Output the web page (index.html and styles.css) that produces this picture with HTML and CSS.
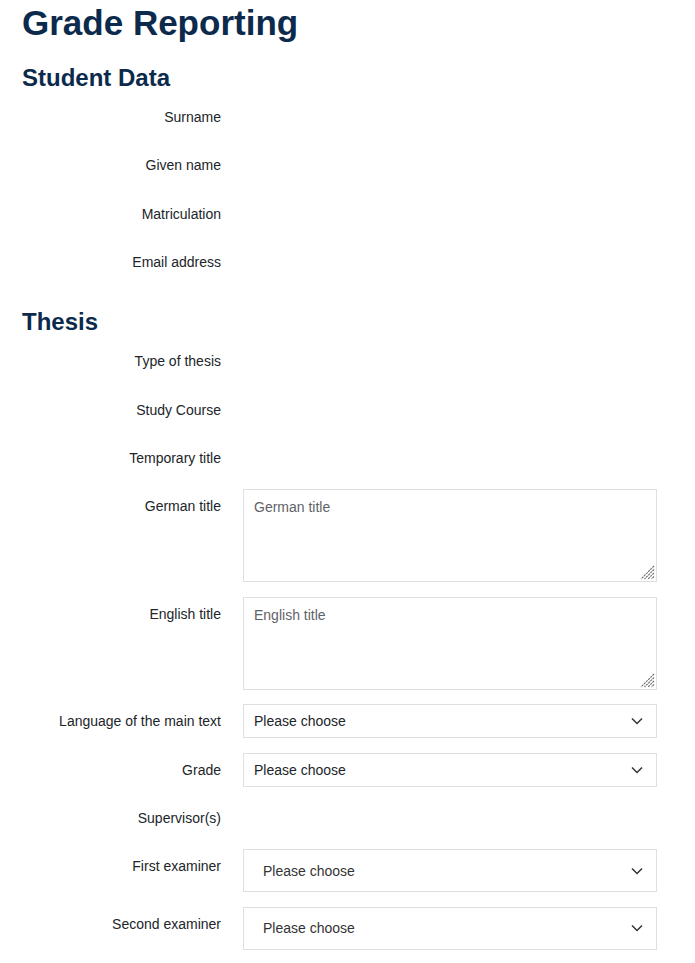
FILE: index.html
```html
<!DOCTYPE html>
<html lang="en">
<head>
<meta charset="utf-8">
<title>Grade Reporting</title>
<link rel="stylesheet" href="styles.css">
</head>
<body>
<main class="page">
  <h1 class="title">Grade Reporting</h1>

  <section class="section">
    <h2 class="section-title">Student Data</h2>
    <div class="rows">
      <div class="row"><label class="label">Surname</label><div class="field"></div></div>
      <div class="row"><label class="label">Given name</label><div class="field"></div></div>
      <div class="row"><label class="label">Matriculation</label><div class="field"></div></div>
      <div class="row"><label class="label">Email address</label><div class="field"></div></div>
    </div>
  </section>

  <section class="section section-next">
    <h2 class="section-title">Thesis</h2>
    <div class="rows">
      <div class="row"><label class="label">Type of thesis</label><div class="field"></div></div>
      <div class="row"><label class="label">Study Course</label><div class="field"></div></div>
      <div class="row"><label class="label">Temporary title</label><div class="field"></div></div>
      <div class="row"><label class="label" for="gt">German title</label>
        <div class="field textarea-wrap">
          <textarea id="gt" class="textarea" placeholder="German title"></textarea>
          <svg class="grip" width="15" height="15" viewBox="0 0 15 15"><path d="M14 1 L1 14 M14 4.5 L4.5 14 M14 8 L8 14 M14 11.5 L11.5 14" fill="none" stroke="#6e6e6e" stroke-width="1.1" stroke-dasharray="2.2 0.8"/></svg>
        </div>
      </div>
      <div class="row"><label class="label" for="et">English title</label>
        <div class="field textarea-wrap">
          <textarea id="et" class="textarea" placeholder="English title"></textarea>
          <svg class="grip" width="15" height="15" viewBox="0 0 15 15"><path d="M14 1 L1 14 M14 4.5 L4.5 14 M14 8 L8 14 M14 11.5 L11.5 14" fill="none" stroke="#6e6e6e" stroke-width="1.1" stroke-dasharray="2.2 0.8"/></svg>
        </div>
      </div>
      <div class="row"><label class="label" for="lang">Language of the main text</label>
        <div class="field select-wrap">
          <select id="lang" class="select"><option>Please choose</option></select>
          <svg class="chevron" width="12" height="8" viewBox="0 0 12 8"><path d="M1 1.5 L6 6.5 L11 1.5" fill="none" stroke="#333" stroke-width="1.5"/></svg>
        </div>
      </div>
      <div class="row"><label class="label" for="grade">Grade</label>
        <div class="field select-wrap">
          <select id="grade" class="select"><option>Please choose</option></select>
          <svg class="chevron" width="12" height="8" viewBox="0 0 12 8"><path d="M1 1.5 L6 6.5 L11 1.5" fill="none" stroke="#333" stroke-width="1.5"/></svg>
        </div>
      </div>
      <div class="row"><label class="label">Supervisor(s)</label><div class="field"></div></div>
      <div class="row"><label class="label" for="ex1">First examiner</label>
        <div class="field select-wrap">
          <select id="ex1" class="select select-lg"><option>Please choose</option></select>
          <svg class="chevron" width="12" height="8" viewBox="0 0 12 8"><path d="M1 1.5 L6 6.5 L11 1.5" fill="none" stroke="#333" stroke-width="1.5"/></svg>
        </div>
      </div>
      <div class="row"><label class="label" for="ex2">Second examiner</label>
        <div class="field select-wrap">
          <select id="ex2" class="select select-lg"><option>Please choose</option></select>
          <svg class="chevron" width="12" height="8" viewBox="0 0 12 8"><path d="M1 1.5 L6 6.5 L11 1.5" fill="none" stroke="#333" stroke-width="1.5"/></svg>
        </div>
      </div>
    </div>
  </section>
</main>
</body>
</html>
```

FILE: styles.css
```css
* { box-sizing: border-box; }

html, body {
  margin: 0;
  padding: 0;
  background: #ffffff;
}

body {
  font-family: "Liberation Sans", Arial, sans-serif;
  color: #212529;
  font-size: 14px;
}

.page {
  padding: 0 38px 0 22px;
}

.title {
  margin: 2px 0 19px;
  font-size: 35px;
  line-height: 42px;
  font-weight: 700;
  color: #0c2a4c;
}

.section {
  display: flex;
  flex-direction: column;
}

.section-next {
  margin-top: 28px;
}

.section-title {
  margin: 0 0 8px;
  font-size: 24px;
  line-height: 29px;
  font-weight: 700;
  color: #0c2a4c;
}

.rows {
  display: flex;
  flex-direction: column;
  gap: 14.4px;
}

.row {
  display: grid;
  grid-template-columns: 199px 1fr;
  column-gap: 22px;
  min-height: 34px;
}

.label {
  text-align: right;
  padding-top: 7px;
  line-height: 20px;
  font-size: 14px;
  color: #212529;
}

.field {
  min-height: 34px;
}

.textarea-wrap {
  position: relative;
}

.textarea {
  display: block;
  width: 100%;
  height: 93px;
  margin: 0;
  padding: 7px 10px;
  border: 1px solid #dcdfe3;
  border-radius: 0;
  font-family: "Liberation Sans", Arial, sans-serif;
  font-size: 14px;
  line-height: 20px;
  color: #212529;
  background: #fff;
  resize: none;
}

.textarea::placeholder {
  color: #5f6368;
  opacity: 1;
}

.grip {
  position: absolute;
  right: 2px;
  bottom: 2px;
  pointer-events: none;
}

.select-wrap {
  position: relative;
}

.select {
  display: block;
  width: 100%;
  height: 34px;
  margin: 0;
  padding: 0 40px 0 10px;
  border: 1px solid #dcdfe3;
  border-radius: 0;
  background: #fff;
  font-family: "Liberation Sans", Arial, sans-serif;
  font-size: 14px;
  color: #212529;
  appearance: none;
  -webkit-appearance: none;
}

.select-lg {
  height: 43px;
  padding-left: 19px;
  color: #333;
}

.chevron {
  position: absolute;
  right: 14px;
  top: 50%;
  margin-top: -4px;
  pointer-events: none;
}
```
